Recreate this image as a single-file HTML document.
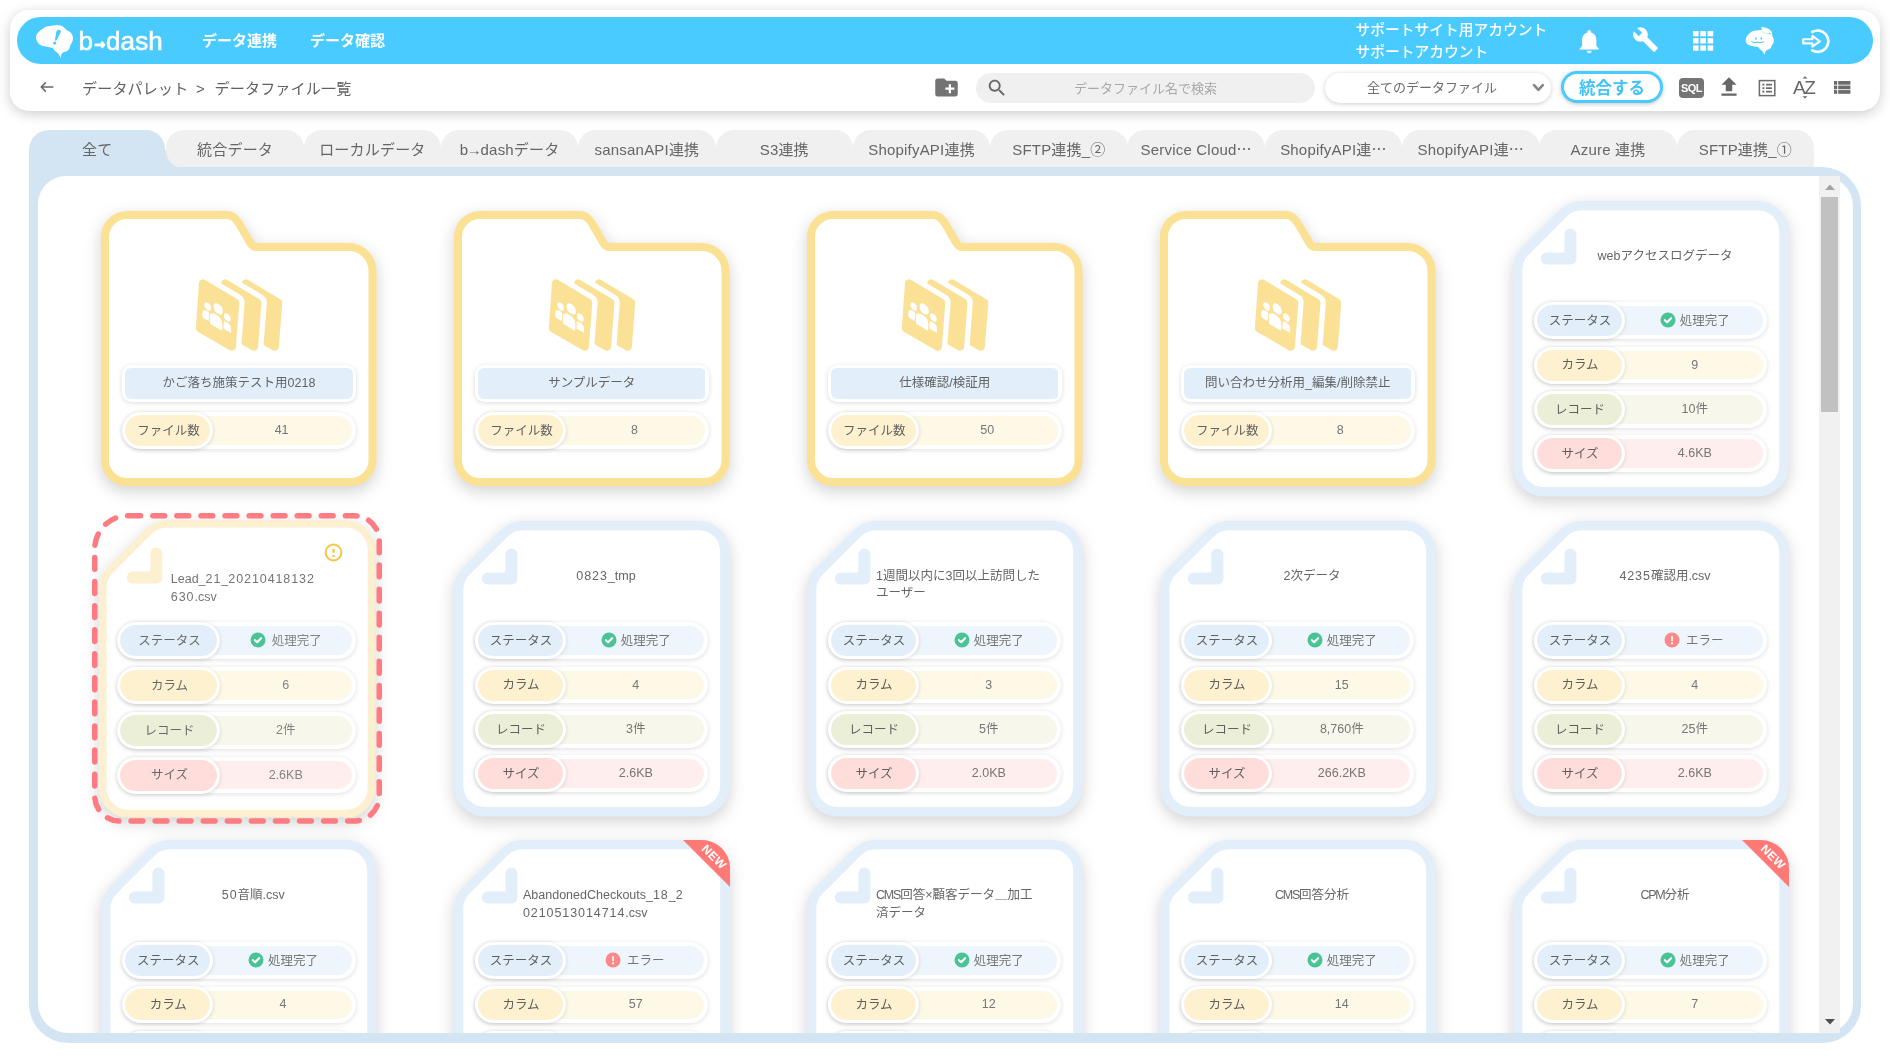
<!DOCTYPE html>
<html lang="ja"><head><meta charset="utf-8"><title>データファイル一覧</title>
<style>
html,body{margin:0;padding:0}
html{background:#fff}
body{width:1890px;height:1063px;overflow:hidden;background:#fff;position:relative;opacity:.999;
 font-family:"Liberation Sans","Noto Sans CJK JP",sans-serif;color:#5a5a5a;font-size:13px}
*{box-sizing:border-box}
.abs{position:absolute}
.hdr{position:absolute;left:10px;top:10px;width:1870px;height:101px;border-radius:19px;background:#fff;
 box-shadow:0 3px 13px rgba(0,0,0,.2)}
.bar{position:absolute;left:7px;top:7px;width:1856px;height:47px;border-radius:24px;background:#49cbff}
.nav{position:absolute;top:0;height:47px;line-height:47px;color:#fff;font-weight:700;font-size:15px;white-space:nowrap}
.acct{position:absolute;left:1338.6px;top:3.1px;color:#fff;font-size:14.75px;line-height:21.8px;white-space:nowrap;font-weight:500}
.bc{position:absolute;left:72px;top:66.6px;height:24px;line-height:24px;font-size:15px;color:#606060;white-space:nowrap;letter-spacing:.2px}
.search{position:absolute;left:966px;top:63px;width:339px;height:30px;border-radius:15px;background:#f0f0f0}
.search span{position:absolute;left:0;right:0;top:0;text-align:center;line-height:32px;font-size:13px;color:#a9a9a9}
.sel{position:absolute;left:1315px;top:63px;width:226px;height:30px;border-radius:15px;background:#fff;
 box-shadow:0 1px 5px rgba(0,0,0,.2)}
.sel span{position:absolute;left:0;width:214px;top:0;text-align:center;line-height:29.5px;font-size:13px;color:#6c6c6c}
.btn{position:absolute;left:1551px;top:61px;width:102px;height:32px;border-radius:16px;border:3px solid #49cbff;background:#fff;
 box-shadow:0 1px 4px rgba(0,0,0,.25);color:#41c3f8;font-size:16.5px;line-height:29.3px;text-align:center;font-weight:700}
.tabs{position:absolute;left:29px;top:130px;height:37.5px}
.tab{position:absolute;top:0;height:37.5px;width:137.5px;border-radius:18px 18px 0 0;background:#f0f0f0;color:#666;font-size:15px;
 line-height:39px;text-align:center;white-space:nowrap;letter-spacing:.2px}
.tab.on{background:#d3e4f3;border-radius:20px 19px 0 0;width:136.4px}
.wrap{position:absolute;left:29px;top:167.3px;width:1832px;height:875.7px;border-radius:0 39px 38px 39px;background:#d3e4f3}
.inner{position:absolute;left:9px;top:9px;width:1815px;height:856.7px;border-radius:28px 30px 29px 30px;background:#fff;overflow:hidden}
.card{position:absolute;width:276px}
.card svg.shape{position:absolute;left:0;top:0;overflow:visible}
.title{position:absolute;left:69px;width:166px;top:47px;height:40px;font-size:12.5px;line-height:17.6px;color:#666;white-space:nowrap}
.title.c{text-align:center}
.row{position:absolute;left:20px;width:234px;height:37px}
.val{position:absolute;left:.6px;top:.2px;width:232px;height:36.6px;border-radius:18.3px;padding:3.8px;
 box-shadow:0 1px 5px rgba(0,0,0,.13);font-size:12.5px;color:#767676;white-space:nowrap}
.selc .lab{color:#6a6a6a}.selc .val{color:#848484}.selc .title{color:#747474}.selc .val svg{margin-right:6px}
.dg{letter-spacing:.92px}.cp{letter-spacing:-1.2px}
.vt{height:29px;line-height:29px;text-align:center}
.lab{position:absolute;left:0;top:0;width:91px;height:37px;border-radius:18.5px;padding:2.8px;
 box-shadow:0 1px 4px rgba(0,0,0,.14);text-align:center;line-height:32.4px;font-size:12.5px;color:#606060;white-space:nowrap;text-indent:1.6px}
.r1 .lab{background:linear-gradient(#e2effa,#e2effa) content-box,#fff}.r1 .val{background:linear-gradient(#eef5fc,#eef5fc) content-box,#fff}
.r2 .lab{background:linear-gradient(#fdf1cf,#fdf1cf) content-box,#fff}.r2 .val{background:linear-gradient(#fef8e7,#fef8e7) content-box,#fff}
.r3 .lab{background:linear-gradient(#ecefd8,#ecefd8) content-box,#fff}.r3 .val{background:linear-gradient(#f7f8eb,#f7f8eb) content-box,#fff}
.r4 .lab{background:linear-gradient(#ffdddb,#ffdddb) content-box,#fff}.r4 .val{background:linear-gradient(#ffeeed,#ffeeed) content-box,#fff}
.val svg{vertical-align:-4.2px;margin-right:4px}
.fname{position:absolute;left:20.7px;top:154px;width:234px;height:37.3px;border-radius:9.5px;padding:3.3px;background:linear-gradient(#e2effa,#e2effa) content-box,#fff;
 box-shadow:0 1px 5px rgba(0,0,0,.14);text-align:center;line-height:30.7px;font-size:12.5px;color:#636363;white-space:nowrap}
.new{position:absolute;right:0;top:0;width:47px;height:47px;overflow:hidden;border-radius:0 28px 0 0}
.new i{position:absolute;left:0;top:0;width:0;height:0;border-top:47px solid #ff7a77;border-left:47px solid transparent}
.new b{position:absolute;left:8.6px;top:11px;width:44px;text-align:center;color:#fff;font-size:12px;font-weight:700;transform:rotate(45deg);
 letter-spacing:.3px;line-height:12px;font-style:normal}
</style></head>
<body>

<div class="hdr"><div class="bar">
<svg class="abs" style="left:13px;top:1px" width="50" height="44" viewBox="0 0 50 44"><path fill="#fff" d="M6.5,22.1 Q5.6,19.5 6.5,17.0 Q7.5,14.5 9.9,12.7 Q12.4,10.8 14.5,9.6 Q16.6,8.3 19.2,8.1 Q21.9,7.9 25.0,7.2 Q28.1,6.6 30.6,7.5 Q33.1,8.3 34.8,10.2 Q36.4,12.0 38.5,13.1 Q40.6,14.1 41.8,16.1 Q43.0,18.2 43.1,20.3 Q43.3,22.4 41.7,24.9 Q40.1,27.3 39.7,29.4 Q39.3,31.5 37.8,32.5 Q36.4,33.5 34.0,34.0 Q31.5,34.4 31.1,37.2 Q30.6,40.1 30.6,40.1 Q30.6,40.1 29.6,37.7 Q28.6,35.2 26.7,34.2 Q24.8,33.1 23.7,31.2 Q22.6,29.4 21.1,29.5 Q19.5,29.6 17.8,29.1 Q16.1,28.6 13.7,28.1 Q11.2,27.7 9.3,26.2 Q7.5,24.8 6.5,22.1Z"/>
<path fill="#49cbff" d="M26.2,14.2 Q26.4,11.6 28.8,11.7 Q31.2,12 30.6,14.4 L26.4,22.6 Q25.6,23.2 24.9,22.4 Z"/><circle cx="24.75" cy="25.1" r="1.6" fill="#49cbff"/></svg>
<div class="abs" style="left:61.5px;top:3.5px;height:40px;line-height:40px;color:#fff;font-weight:400;font-size:26px;letter-spacing:.05px;white-space:nowrap;-webkit-text-stroke:.55px #fff">b<span style="font-family:'DejaVu Sans',sans-serif;font-weight:700;font-size:13px;letter-spacing:0;position:relative;top:-1px;margin:0 1px 0 1.2px;-webkit-text-stroke:1.1px #fff">→</span>dash</div>
<div class="nav" style="left:185px">データ連携</div><div class="nav" style="left:293px">データ確認</div>
<div class="acct">サポートサイト用アカウント<br>サポートアカウント</div>
<div class="abs" style="left:1558px;top:9.5px"><svg width="28.5" height="28.5" viewBox="0 0 24 24" style=""><path fill="#fff" d="M12 22c1.1 0 2-.9 2-2h-4c0 1.1.89 2 2 2zm6-6v-5c0-3.07-1.64-5.64-4.5-6.32V4c0-.83-.67-1.5-1.5-1.5s-1.5.67-1.5 1.5v.68C7.63 5.36 6 7.92 6 11v5l-2 2v1h16v-1l-2-2z"/></svg></div>
<div class="abs" style="left:1615px;top:9px"><svg width="27" height="27" viewBox="0 0 24 24" style=""><path fill="#fff" d="M22.7 19l-9.1-9.1c.9-2.3.4-5-1.5-6.9-2-2-5-2.4-7.4-1.3L9 6 6 9 1.6 4.7C.4 7.1.9 10.1 2.9 12.1c1.9 1.9 4.6 2.4 6.9 1.5l9.1 9.1c.4.4 1 .4 1.4 0l2.3-2.3c.5-.4.5-1.1.1-1.4z"/></svg></div>
<svg class="abs" style="left:1676px;top:13.9px" width="21" height="20" viewBox="0 0 21 20"><g fill="#fff"><rect x="0" y="0" width="5.6" height="5.3"/><rect x="0" y="7.2" width="5.6" height="5.3"/><rect x="0" y="14.4" width="5.6" height="5.3"/><rect x="7.3" y="0" width="5.6" height="5.3"/><rect x="7.3" y="7.2" width="5.6" height="5.3"/><rect x="7.3" y="14.4" width="5.6" height="5.3"/><rect x="14.6" y="0" width="5.6" height="5.3"/><rect x="14.6" y="7.2" width="5.6" height="5.3"/><rect x="14.6" y="14.4" width="5.6" height="5.3"/></g></svg>
<svg class="abs" style="left:1718px;top:3px" width="50" height="40" viewBox="0 0 50 40"><path fill="#fff" d="M10.8,21.5 Q10.2,19.6 11.3,17.3 Q12.4,15.0 14.6,13.2 Q16.9,11.3 19.0,10.8 Q21.1,10.3 23.5,10.3 Q25.8,10.3 26.5,9.7 Q27.1,9.0 26.6,7.9 Q26.0,6.8 26.0,6.8 Q26.0,6.8 29.2,7.3 Q32.4,7.9 34.6,9.6 Q36.9,11.3 37.0,13.6 Q37.2,15.8 38.2,17.7 Q39.1,19.6 38.8,21.5 Q38.4,23.3 37.5,24.5 Q36.5,25.6 36.3,26.7 Q36.1,27.8 35.0,28.8 Q33.9,29.7 32.2,30.1 Q30.5,30.5 30.1,32.6 Q29.7,34.8 29.7,34.8 Q29.7,34.8 28.6,32.8 Q27.5,30.9 26.0,29.9 Q24.5,29.0 23.9,27.9 Q23.3,26.7 21.8,26.7 Q20.3,26.7 19.2,26.4 Q18.1,26.0 16.2,25.8 Q14.3,25.6 12.8,24.5 Q11.3,23.3 10.8,21.5Z"/>
<g fill="#49cbff"><ellipse cx="20.9" cy="18.4" rx=".8" ry="1.25"/><ellipse cx="26.3" cy="18.4" rx=".8" ry="1.25"/><circle cx="34.6" cy="13.5" r=".75"/></g>
<g fill="none" stroke="#49cbff" stroke-linecap="round"><path d="M16.8,21.6 Q19.6,23.6 22.5,22 Q25.5,23.6 28.4,21.6" stroke-width="1.1"/><path d="M27.2,11.2 Q30,14.6 35.4,13.9" stroke-width=".5" opacity=".6"/></g></svg>
<svg class="abs" style="left:1782px;top:9px" width="32" height="30" viewBox="0 0 32 30"><g fill="none" stroke="#fff" stroke-width="3" stroke-linecap="round" stroke-linejoin="round">
<path d="M13.2 6 A10.7 10.7 0 1 1 13.2 24.4" stroke-width="2.7"/><path d="M4.2 13.2 H13.4 V9.9 L20.8 15.3 L13.4 20.7 V17.4 H4.2 Z" stroke-width="2.1"/></g></svg>
</div>
<svg class="abs" style="left:28px;top:69px" width="18" height="16" viewBox="0 0 18 16"><path d="M14.8 8 H3.4 M7.4 3.9 L3.2 8 L7.4 12.1" fill="none" stroke="#666" stroke-width="1.5" stroke-linecap="round" stroke-linejoin="round"/></svg>
<div class="bc">データパレット<span style="margin:0 9.7px 0 7.5px">&gt;</span>データファイル一覧</div>
<div class="abs" style="left:923px;top:64px"><svg width="27" height="27" viewBox="0 0 24 24" style=""><path fill="#737373" d="M20 6h-8l-2-2H4c-1.11 0-1.99.89-1.99 2L2 18c0 1.11.89 2 2 2h16c1.11 0 2-.89 2-2V8c0-1.11-.89-2-2-2zm-1 8h-3v3h-2v-3h-3v-2h3V9h2v3h3v2z"/></svg></div>
<div class="search"><svg width="22" height="22" viewBox="0 0 24 24" style="position:absolute;left:10px;top:4px"><path fill="#666" d="M15.5 14h-.79l-.28-.27C15.41 12.59 16 11.11 16 9.5 16 5.91 13.09 3 9.5 3S3 5.91 3 9.5 5.91 16 9.5 16c1.61 0 3.09-.59 4.23-1.57l.27.28v.79l5 4.99L20.49 19l-4.99-5zm-6 0C7.01 14 5 11.99 5 9.5S7.01 5 9.5 5 14 7.01 14 9.5 11.99 14 9.5 14z"/></svg><span>データファイル名で検索</span></div>
<div class="sel"><span>全てのデータファイル</span><svg style="position:absolute;left:206.5px;top:9.6px" width="13" height="10" viewBox="0 0 13 10"><path d="M2 2.2 L6.4 6.9 L10.8 2.2" fill="none" stroke="#848484" stroke-width="2.6" stroke-linecap="round" stroke-linejoin="round"/></svg></div>
<div class="btn">統合する</div>
<div class="abs" style="left:1669px;top:68px;width:25px;height:20px;border-radius:4px;background:#757575;color:#fff;font-size:11px;font-weight:700;line-height:20px;text-align:center;letter-spacing:-.6px">SQL</div>
<div class="abs" style="left:1706px;top:64px"><svg width="26" height="26" viewBox="0 0 24 24" style=""><path fill="#666" d="M9 16h6v-6h4l-7-7-7 7h4zm-4 2h14v2H5z"/></svg></div>
<svg class="abs" style="left:1748px;top:69px" width="18" height="18" viewBox="0 0 18 18"><rect x="1.4" y="1.6" width="15.4" height="15" fill="none" stroke="#6b6b6b" stroke-width="1.5"/><g fill="#6b6b6b"><rect x="4.4" y="4.7" width="2" height="1.9"/><rect x="4.4" y="8.2" width="2" height="1.9"/><rect x="4.4" y="11.7" width="2" height="1.9"/><rect x="8" y="4.8" width="6" height="1.7"/><rect x="8" y="8.3" width="6" height="1.7"/><rect x="8" y="11.8" width="6" height="1.7"/></g></svg>
<div class="abs" style="left:1783px;top:66.7px;font-size:19px;line-height:22px;color:#666;letter-spacing:-1.5px">AZ</div>
<svg class="abs" style="left:1790px;top:64px" width="10" height="30" viewBox="0 0 10 30"><path fill="#666" d="M2.6 4.6 L5 2.2 L7.4 4.6Z M2.6 22.2 L5 24.6 L7.4 22.2Z"/></svg>
<svg class="abs" style="left:1824px;top:71.4px" width="17" height="13" viewBox="0 0 17 13"><g fill="#6b6b6b"><rect x="0" y="0" width="3.2" height="3.7"/><rect x="0" y="4.55" width="3.2" height="3.7"/><rect x="0" y="9.1" width="3.2" height="3.7"/><rect x="4.2" y="0" width="12.2" height="3.7"/><rect x="4.2" y="4.55" width="12.2" height="3.7"/><rect x="4.2" y="9.1" width="12.2" height="3.7"/></g></svg>
</div>
<div class="tabs"><div class="abs" style="left:130px;top:19.5px;width:40px;height:18px;background:#d3e4f3"></div>
<div class="tab on" style="left:0.0px">全て</div>
<div class="tab" style="left:137.3px;border-bottom-left-radius:18px">統合データ</div>
<div class="tab" style="left:274.6px">ローカルデータ</div>
<div class="tab" style="left:411.9px">b<span style="margin:0 -1.5px">→</span>dashデータ</div>
<div class="tab" style="left:549.2px">sansanAPI連携</div>
<div class="tab" style="left:686.5px">S3連携</div>
<div class="tab" style="left:823.8px">ShopifyAPI連携</div>
<div class="tab" style="left:961.1px">SFTP連携_②</div>
<div class="tab" style="left:1098.4px">Service Cloud<span style="font-family:'Noto Sans CJK JP',sans-serif;line-height:0">…</span></div>
<div class="tab" style="left:1235.7px">ShopifyAPI連<span style="font-family:'Noto Sans CJK JP',sans-serif;line-height:0">…</span></div>
<div class="tab" style="left:1373.0px">ShopifyAPI連<span style="font-family:'Noto Sans CJK JP',sans-serif;line-height:0">…</span></div>
<div class="tab" style="left:1510.3px">Azure 連携</div>
<div class="tab" style="left:1647.6px">SFTP連携_①</div>
</div>
<div class="wrap"><div class="inner">
<div class="card" style="left:63.3px;top:34.5px;height:275px"><svg class="shape" width="275.5" height="275" viewBox="0 0 275.5 275" style="filter:drop-shadow(0 5px 8px rgba(0,0,0,.18))"><path d="M4.0,26.0 A22,22 0 0 1 26.0,4.0 L125.6,4.0 Q132.6,4.0 137.44,11.59 L149.75,32.63 Q151.9,36 155.9,36 L247.5,36 A24,24 0 0 1 271.5,60 L271.5,249.0 A22,22 0 0 1 249.5,271.0 L26.0,271.0 A22,22 0 0 1 4.0,249.0 Z" fill="#fff" stroke="#fbe194" stroke-width="8" stroke-linejoin="round"/></svg><svg class="abs" style="left:83.7px;top:59.2px" width="110" height="90" viewBox="0 0 1299 1063">
<g fill="#fbe196" stroke="#fff" stroke-width="126" paint-order="stroke" stroke-linejoin="round">
<path transform="translate(507,0)" d="M165,155 A48,48 0 0 1 238,118 L618,346 A48,48 0 0 1 641,390 L601,911 A48,48 0 0 1 529,948 L151,729 A48,48 0 0 1 128,684 Z"/><path transform="translate(262,0)" d="M165,155 A48,48 0 0 1 238,118 L618,346 A48,48 0 0 1 641,390 L601,911 A48,48 0 0 1 529,948 L151,729 A48,48 0 0 1 128,684 Z"/><path d="M165,155 A48,48 0 0 1 238,118 L618,346 A48,48 0 0 1 641,390 L601,911 A48,48 0 0 1 529,948 L151,729 A48,48 0 0 1 128,684 Z"/></g>
<g fill="#fff" transform="matrix(1,0.58,0,1,0,-227.4)">
<ellipse cx="392" cy="460" rx="55" ry="58"/><ellipse cx="268" cy="504" rx="40" ry="44"/><ellipse cx="500" cy="499" rx="40" ry="44"/>
<path d="M295,676 L295,612 Q295,540 367,540 Q440,540 440,612 L440,676 Q440,692 424,692 L311,692 Q295,692 295,676 Z"/>
<path d="M205,652 L205,618 Q205,561 255,561 Q280,561 289,577 L279,668 L221,668 Q205,668 205,652 Z"/>
<path d="M545,642 L545,615 Q545,559 497,559 Q470,559 459,573 L453,657 L529,657 Q545,657 545,642 Z"/>
</g></svg><div class="fname">かご落ち施策テスト用0218</div><div class="row r2" style="left:21px;width:234px;top:201.4px"><div class="val" style="width:233.4px"><div class="vt" style="margin-left:84px">41</div></div><div class="lab" style="width:91px">ファイル数</div></div></div>
<div class="card" style="left:416.1px;top:34.5px;height:275px"><svg class="shape" width="275.5" height="275" viewBox="0 0 275.5 275" style="filter:drop-shadow(0 5px 8px rgba(0,0,0,.18))"><path d="M4.0,26.0 A22,22 0 0 1 26.0,4.0 L125.6,4.0 Q132.6,4.0 137.44,11.59 L149.75,32.63 Q151.9,36 155.9,36 L247.5,36 A24,24 0 0 1 271.5,60 L271.5,249.0 A22,22 0 0 1 249.5,271.0 L26.0,271.0 A22,22 0 0 1 4.0,249.0 Z" fill="#fff" stroke="#fbe194" stroke-width="8" stroke-linejoin="round"/></svg><svg class="abs" style="left:83.7px;top:59.2px" width="110" height="90" viewBox="0 0 1299 1063">
<g fill="#fbe196" stroke="#fff" stroke-width="126" paint-order="stroke" stroke-linejoin="round">
<path transform="translate(507,0)" d="M165,155 A48,48 0 0 1 238,118 L618,346 A48,48 0 0 1 641,390 L601,911 A48,48 0 0 1 529,948 L151,729 A48,48 0 0 1 128,684 Z"/><path transform="translate(262,0)" d="M165,155 A48,48 0 0 1 238,118 L618,346 A48,48 0 0 1 641,390 L601,911 A48,48 0 0 1 529,948 L151,729 A48,48 0 0 1 128,684 Z"/><path d="M165,155 A48,48 0 0 1 238,118 L618,346 A48,48 0 0 1 641,390 L601,911 A48,48 0 0 1 529,948 L151,729 A48,48 0 0 1 128,684 Z"/></g>
<g fill="#fff" transform="matrix(1,0.58,0,1,0,-227.4)">
<ellipse cx="392" cy="460" rx="55" ry="58"/><ellipse cx="268" cy="504" rx="40" ry="44"/><ellipse cx="500" cy="499" rx="40" ry="44"/>
<path d="M295,676 L295,612 Q295,540 367,540 Q440,540 440,612 L440,676 Q440,692 424,692 L311,692 Q295,692 295,676 Z"/>
<path d="M205,652 L205,618 Q205,561 255,561 Q280,561 289,577 L279,668 L221,668 Q205,668 205,652 Z"/>
<path d="M545,642 L545,615 Q545,559 497,559 Q470,559 459,573 L453,657 L529,657 Q545,657 545,642 Z"/>
</g></svg><div class="fname">サンプルデータ</div><div class="row r2" style="left:21px;width:234px;top:201.4px"><div class="val" style="width:233.4px"><div class="vt" style="margin-left:84px">8</div></div><div class="lab" style="width:91px">ファイル数</div></div></div>
<div class="card" style="left:769.0px;top:34.5px;height:275px"><svg class="shape" width="275.5" height="275" viewBox="0 0 275.5 275" style="filter:drop-shadow(0 5px 8px rgba(0,0,0,.18))"><path d="M4.0,26.0 A22,22 0 0 1 26.0,4.0 L125.6,4.0 Q132.6,4.0 137.44,11.59 L149.75,32.63 Q151.9,36 155.9,36 L247.5,36 A24,24 0 0 1 271.5,60 L271.5,249.0 A22,22 0 0 1 249.5,271.0 L26.0,271.0 A22,22 0 0 1 4.0,249.0 Z" fill="#fff" stroke="#fbe194" stroke-width="8" stroke-linejoin="round"/></svg><svg class="abs" style="left:83.7px;top:59.2px" width="110" height="90" viewBox="0 0 1299 1063">
<g fill="#fbe196" stroke="#fff" stroke-width="126" paint-order="stroke" stroke-linejoin="round">
<path transform="translate(507,0)" d="M165,155 A48,48 0 0 1 238,118 L618,346 A48,48 0 0 1 641,390 L601,911 A48,48 0 0 1 529,948 L151,729 A48,48 0 0 1 128,684 Z"/><path transform="translate(262,0)" d="M165,155 A48,48 0 0 1 238,118 L618,346 A48,48 0 0 1 641,390 L601,911 A48,48 0 0 1 529,948 L151,729 A48,48 0 0 1 128,684 Z"/><path d="M165,155 A48,48 0 0 1 238,118 L618,346 A48,48 0 0 1 641,390 L601,911 A48,48 0 0 1 529,948 L151,729 A48,48 0 0 1 128,684 Z"/></g>
<g fill="#fff" transform="matrix(1,0.58,0,1,0,-227.4)">
<ellipse cx="392" cy="460" rx="55" ry="58"/><ellipse cx="268" cy="504" rx="40" ry="44"/><ellipse cx="500" cy="499" rx="40" ry="44"/>
<path d="M295,676 L295,612 Q295,540 367,540 Q440,540 440,612 L440,676 Q440,692 424,692 L311,692 Q295,692 295,676 Z"/>
<path d="M205,652 L205,618 Q205,561 255,561 Q280,561 289,577 L279,668 L221,668 Q205,668 205,652 Z"/>
<path d="M545,642 L545,615 Q545,559 497,559 Q470,559 459,573 L453,657 L529,657 Q545,657 545,642 Z"/>
</g></svg><div class="fname">仕様確認/検証用</div><div class="row r2" style="left:21px;width:234px;top:201.4px"><div class="val" style="width:233.4px"><div class="vt" style="margin-left:84px">50</div></div><div class="lab" style="width:91px">ファイル数</div></div></div>
<div class="card" style="left:1122.0px;top:34.5px;height:275px"><svg class="shape" width="275.5" height="275" viewBox="0 0 275.5 275" style="filter:drop-shadow(0 5px 8px rgba(0,0,0,.18))"><path d="M4.0,26.0 A22,22 0 0 1 26.0,4.0 L125.6,4.0 Q132.6,4.0 137.44,11.59 L149.75,32.63 Q151.9,36 155.9,36 L247.5,36 A24,24 0 0 1 271.5,60 L271.5,249.0 A22,22 0 0 1 249.5,271.0 L26.0,271.0 A22,22 0 0 1 4.0,249.0 Z" fill="#fff" stroke="#fbe194" stroke-width="8" stroke-linejoin="round"/></svg><svg class="abs" style="left:83.7px;top:59.2px" width="110" height="90" viewBox="0 0 1299 1063">
<g fill="#fbe196" stroke="#fff" stroke-width="126" paint-order="stroke" stroke-linejoin="round">
<path transform="translate(507,0)" d="M165,155 A48,48 0 0 1 238,118 L618,346 A48,48 0 0 1 641,390 L601,911 A48,48 0 0 1 529,948 L151,729 A48,48 0 0 1 128,684 Z"/><path transform="translate(262,0)" d="M165,155 A48,48 0 0 1 238,118 L618,346 A48,48 0 0 1 641,390 L601,911 A48,48 0 0 1 529,948 L151,729 A48,48 0 0 1 128,684 Z"/><path d="M165,155 A48,48 0 0 1 238,118 L618,346 A48,48 0 0 1 641,390 L601,911 A48,48 0 0 1 529,948 L151,729 A48,48 0 0 1 128,684 Z"/></g>
<g fill="#fff" transform="matrix(1,0.58,0,1,0,-227.4)">
<ellipse cx="392" cy="460" rx="55" ry="58"/><ellipse cx="268" cy="504" rx="40" ry="44"/><ellipse cx="500" cy="499" rx="40" ry="44"/>
<path d="M295,676 L295,612 Q295,540 367,540 Q440,540 440,612 L440,676 Q440,692 424,692 L311,692 Q295,692 295,676 Z"/>
<path d="M205,652 L205,618 Q205,561 255,561 Q280,561 289,577 L279,668 L221,668 Q205,668 205,652 Z"/>
<path d="M545,642 L545,615 Q545,559 497,559 Q470,559 459,573 L453,657 L529,657 Q545,657 545,642 Z"/>
</g></svg><div class="fname">問い合わせ分析用_編集/削除禁止</div><div class="row r2" style="left:21px;width:234px;top:201.4px"><div class="val" style="width:233.4px"><div class="vt" style="margin-left:84px">8</div></div><div class="lab" style="width:91px">ファイル数</div></div></div>
<div class="card" style="left:1475.0px;top:24.3px;height:295px"><svg class="shape" width="275.5" height="295.4" viewBox="0 0 275.5 295.4" style="filter:drop-shadow(0 5px 8px rgba(0,0,0,.18))"><path d="M4.65,68.9260930650349 Q4.65,57.9260930650349 12.43,50.15 L50.15,12.43 Q57.9260930650349,4.65 68.9260930650349,4.65 L244.85000000000002,4.65 A26,26 0 0 1 270.85,30.65 L270.85,264.75 A26,26 0 0 1 244.85000000000002,290.75 L30.65,290.75 A26,26 0 0 1 4.65,264.75 Z" fill="#fff" stroke="#e2eef9" stroke-width="9.3" stroke-linejoin="round"/><path d="M57.4,33.5 V57.4 H33.8" fill="none" stroke="#e2eef9" stroke-width="12" stroke-linecap="round" stroke-linejoin="round"/></svg><div class="title c">webアクセスログデータ</div><div class="row r1" style="left:20.7px;width:233.8px;top:101.7px"><div class="val" style="width:233.0px"><div class="vt" style="margin-left:88px"><svg width="16" height="16" viewBox="0 0 16 16"><circle cx="8" cy="8" r="7.5" fill="#4ac395"/><path d="M4.9 8.2l2.2 2.1 4-4.1" fill="none" stroke="#fff" stroke-width="2.1" stroke-linecap="round" stroke-linejoin="round"/></svg><span style="position:relative;top:.9px">処理完了</span></div></div><div class="lab" style="width:91px">ステータス</div></div><div class="row r2" style="left:20.7px;width:233.8px;top:146.0px"><div class="val" style="width:233.0px"><div class="vt" style="margin-left:88px">9</div></div><div class="lab" style="width:91px">カラム</div></div><div class="row r3" style="left:20.7px;width:233.8px;top:190.3px"><div class="val" style="width:233.0px"><div class="vt" style="margin-left:88px">10件</div></div><div class="lab" style="width:91px">レコード</div></div><div class="row r4" style="left:20.7px;width:233.8px;top:234.6px"><div class="val" style="width:233.0px"><div class="vt" style="margin-left:88px">4.6KB</div></div><div class="lab" style="width:91px">サイズ</div></div></div>
<div class="card selc" style="left:60.8px;top:343.4px;height:298px"><svg class="shape" width="276.2" height="297.6" viewBox="0 0 276.2 297.6" style="filter:drop-shadow(0 5px 8px rgba(0,0,0,.18))"><path d="M3.75,68.5533008588991 Q3.75,57.55330085889911 11.53,49.78 L49.78,11.53 Q57.55330085889911,3.75 68.5533008588991,3.75 L246.45,3.75 A26,26 0 0 1 272.45,29.75 L272.45,267.85 A26,26 0 0 1 246.45,293.85 L29.75,293.85 A26,26 0 0 1 3.75,267.85 Z" fill="#fff" stroke="#fcf0d0" stroke-width="7.5" stroke-linejoin="round"/><path d="M57.4,33.5 V57.4 H33.8" fill="none" stroke="#fcf0d0" stroke-width="12" stroke-linecap="round" stroke-linejoin="round"/></svg><svg class="abs" style="left:-6.8px;top:-6.6px;overflow:visible" width="290" height="311" viewBox="0 0 290 311"><path d="M36.75,2.75 L262.25,2.75 A25,25 0 0 1 287.25,27.75 L287.25,283.05 A25,25 0 0 1 262.25,308.05 L27.75,308.05 A25,25 0 0 1 2.75,283.05 L2.75,35.75 A33,33 0 0 1 35.75,2.75 Z" fill="none" stroke="#ff7b82" stroke-width="5.5" stroke-linecap="round" stroke-dasharray="11.8 12.27"/></svg><svg class="abs" style="left:225.6px;top:23.4px" width="19" height="19" viewBox="0 0 19 19"><circle cx="9.5" cy="9.5" r="7.9" fill="#fff" stroke="#f7c645" stroke-width="2"/><path d="M9.5 5.9v3.7" stroke="#f7c645" stroke-width="2.3" stroke-linecap="butt"/><rect x="8.4" y="12" width="2.2" height="2.1" fill="#f7c645"/></svg><div class="title" style="left:72px;top:50px;line-height:18px">Lead_<span class="dg">21</span>_<span class="dg">20210418132</span><br><span class="dg">630</span>.csv</div><div class="row r1" style="left:18.7px;width:239.2px;top:102.5px"><div class="val" style="width:238.39999999999998px"><div class="vt" style="margin-left:96.9px"><svg width="16" height="16" viewBox="0 0 16 16"><circle cx="8" cy="8" r="7.5" fill="#4ac395"/><path d="M4.9 8.2l2.2 2.1 4-4.1" fill="none" stroke="#fff" stroke-width="2.1" stroke-linecap="round" stroke-linejoin="round"/></svg><span style="position:relative;top:.9px">処理完了</span></div></div><div class="lab" style="width:102.5px">ステータス</div></div><div class="row r2" style="left:18.7px;width:239.2px;top:147.3px"><div class="val" style="width:238.39999999999998px"><div class="vt" style="margin-left:96.9px">6</div></div><div class="lab" style="width:102.5px">カラム</div></div><div class="row r3" style="left:18.7px;width:239.2px;top:192.1px"><div class="val" style="width:238.39999999999998px"><div class="vt" style="margin-left:96.9px">2件</div></div><div class="lab" style="width:102.5px">レコード</div></div><div class="row r4" style="left:18.7px;width:239.2px;top:236.9px"><div class="val" style="width:238.39999999999998px"><div class="vt" style="margin-left:96.9px">2.6KB</div></div><div class="lab" style="width:102.5px">サイズ</div></div></div>
<div class="card" style="left:416.0px;top:344.3px;height:295px"><svg class="shape" width="275.5" height="295.4" viewBox="0 0 275.5 295.4" style="filter:drop-shadow(0 5px 8px rgba(0,0,0,.18))"><path d="M4.65,68.9260930650349 Q4.65,57.9260930650349 12.43,50.15 L50.15,12.43 Q57.9260930650349,4.65 68.9260930650349,4.65 L244.85000000000002,4.65 A26,26 0 0 1 270.85,30.65 L270.85,264.75 A26,26 0 0 1 244.85000000000002,290.75 L30.65,290.75 A26,26 0 0 1 4.65,264.75 Z" fill="#fff" stroke="#e2eef9" stroke-width="9.3" stroke-linejoin="round"/><path d="M57.4,33.5 V57.4 H33.8" fill="none" stroke="#e2eef9" stroke-width="12" stroke-linecap="round" stroke-linejoin="round"/></svg><div class="title c"><span class="dg">0823</span>_tmp</div><div class="row r1" style="left:20.7px;width:233.8px;top:101.7px"><div class="val" style="width:233.0px"><div class="vt" style="margin-left:88px"><svg width="16" height="16" viewBox="0 0 16 16"><circle cx="8" cy="8" r="7.5" fill="#4ac395"/><path d="M4.9 8.2l2.2 2.1 4-4.1" fill="none" stroke="#fff" stroke-width="2.1" stroke-linecap="round" stroke-linejoin="round"/></svg><span style="position:relative;top:.9px">処理完了</span></div></div><div class="lab" style="width:91px">ステータス</div></div><div class="row r2" style="left:20.7px;width:233.8px;top:146.0px"><div class="val" style="width:233.0px"><div class="vt" style="margin-left:88px">4</div></div><div class="lab" style="width:91px">カラム</div></div><div class="row r3" style="left:20.7px;width:233.8px;top:190.3px"><div class="val" style="width:233.0px"><div class="vt" style="margin-left:88px">3件</div></div><div class="lab" style="width:91px">レコード</div></div><div class="row r4" style="left:20.7px;width:233.8px;top:234.6px"><div class="val" style="width:233.0px"><div class="vt" style="margin-left:88px">2.6KB</div></div><div class="lab" style="width:91px">サイズ</div></div></div>
<div class="card" style="left:769.0px;top:344.3px;height:295px"><svg class="shape" width="275.5" height="295.4" viewBox="0 0 275.5 295.4" style="filter:drop-shadow(0 5px 8px rgba(0,0,0,.18))"><path d="M4.65,68.9260930650349 Q4.65,57.9260930650349 12.43,50.15 L50.15,12.43 Q57.9260930650349,4.65 68.9260930650349,4.65 L244.85000000000002,4.65 A26,26 0 0 1 270.85,30.65 L270.85,264.75 A26,26 0 0 1 244.85000000000002,290.75 L30.65,290.75 A26,26 0 0 1 4.65,264.75 Z" fill="#fff" stroke="#e2eef9" stroke-width="9.3" stroke-linejoin="round"/><path d="M57.4,33.5 V57.4 H33.8" fill="none" stroke="#e2eef9" stroke-width="12" stroke-linecap="round" stroke-linejoin="round"/></svg><div class="title">1週間以内に3回以上訪問した<br>ユーザー</div><div class="row r1" style="left:20.7px;width:233.8px;top:101.7px"><div class="val" style="width:233.0px"><div class="vt" style="margin-left:88px"><svg width="16" height="16" viewBox="0 0 16 16"><circle cx="8" cy="8" r="7.5" fill="#4ac395"/><path d="M4.9 8.2l2.2 2.1 4-4.1" fill="none" stroke="#fff" stroke-width="2.1" stroke-linecap="round" stroke-linejoin="round"/></svg><span style="position:relative;top:.9px">処理完了</span></div></div><div class="lab" style="width:91px">ステータス</div></div><div class="row r2" style="left:20.7px;width:233.8px;top:146.0px"><div class="val" style="width:233.0px"><div class="vt" style="margin-left:88px">3</div></div><div class="lab" style="width:91px">カラム</div></div><div class="row r3" style="left:20.7px;width:233.8px;top:190.3px"><div class="val" style="width:233.0px"><div class="vt" style="margin-left:88px">5件</div></div><div class="lab" style="width:91px">レコード</div></div><div class="row r4" style="left:20.7px;width:233.8px;top:234.6px"><div class="val" style="width:233.0px"><div class="vt" style="margin-left:88px">2.0KB</div></div><div class="lab" style="width:91px">サイズ</div></div></div>
<div class="card" style="left:1122.0px;top:344.3px;height:295px"><svg class="shape" width="275.5" height="295.4" viewBox="0 0 275.5 295.4" style="filter:drop-shadow(0 5px 8px rgba(0,0,0,.18))"><path d="M4.65,68.9260930650349 Q4.65,57.9260930650349 12.43,50.15 L50.15,12.43 Q57.9260930650349,4.65 68.9260930650349,4.65 L244.85000000000002,4.65 A26,26 0 0 1 270.85,30.65 L270.85,264.75 A26,26 0 0 1 244.85000000000002,290.75 L30.65,290.75 A26,26 0 0 1 4.65,264.75 Z" fill="#fff" stroke="#e2eef9" stroke-width="9.3" stroke-linejoin="round"/><path d="M57.4,33.5 V57.4 H33.8" fill="none" stroke="#e2eef9" stroke-width="12" stroke-linecap="round" stroke-linejoin="round"/></svg><div class="title c">2次データ</div><div class="row r1" style="left:20.7px;width:233.8px;top:101.7px"><div class="val" style="width:233.0px"><div class="vt" style="margin-left:88px"><svg width="16" height="16" viewBox="0 0 16 16"><circle cx="8" cy="8" r="7.5" fill="#4ac395"/><path d="M4.9 8.2l2.2 2.1 4-4.1" fill="none" stroke="#fff" stroke-width="2.1" stroke-linecap="round" stroke-linejoin="round"/></svg><span style="position:relative;top:.9px">処理完了</span></div></div><div class="lab" style="width:91px">ステータス</div></div><div class="row r2" style="left:20.7px;width:233.8px;top:146.0px"><div class="val" style="width:233.0px"><div class="vt" style="margin-left:88px">15</div></div><div class="lab" style="width:91px">カラム</div></div><div class="row r3" style="left:20.7px;width:233.8px;top:190.3px"><div class="val" style="width:233.0px"><div class="vt" style="margin-left:88px">8,760件</div></div><div class="lab" style="width:91px">レコード</div></div><div class="row r4" style="left:20.7px;width:233.8px;top:234.6px"><div class="val" style="width:233.0px"><div class="vt" style="margin-left:88px">266.2KB</div></div><div class="lab" style="width:91px">サイズ</div></div></div>
<div class="card" style="left:1475.0px;top:344.3px;height:295px"><svg class="shape" width="275.5" height="295.4" viewBox="0 0 275.5 295.4" style="filter:drop-shadow(0 5px 8px rgba(0,0,0,.18))"><path d="M4.65,68.9260930650349 Q4.65,57.9260930650349 12.43,50.15 L50.15,12.43 Q57.9260930650349,4.65 68.9260930650349,4.65 L244.85000000000002,4.65 A26,26 0 0 1 270.85,30.65 L270.85,264.75 A26,26 0 0 1 244.85000000000002,290.75 L30.65,290.75 A26,26 0 0 1 4.65,264.75 Z" fill="#fff" stroke="#e2eef9" stroke-width="9.3" stroke-linejoin="round"/><path d="M57.4,33.5 V57.4 H33.8" fill="none" stroke="#e2eef9" stroke-width="12" stroke-linecap="round" stroke-linejoin="round"/></svg><div class="title c"><span class="dg">4235</span>確認用.csv</div><div class="row r1" style="left:20.7px;width:233.8px;top:101.7px"><div class="val" style="width:233.0px"><div class="vt" style="margin-left:88px"><svg style="margin-right:5.6px;margin-left:-1.6px" width="16" height="16" viewBox="0 0 16 16"><circle cx="8" cy="8" r="7.5" fill="#fc8888"/><path d="M8 4.7v3.7" fill="none" stroke="#fff" stroke-width="1.7" stroke-linecap="round"/><circle cx="8" cy="11.3" r="1.1" fill="#fff"/></svg><span style="position:relative;top:.9px">エラー</span></div></div><div class="lab" style="width:91px">ステータス</div></div><div class="row r2" style="left:20.7px;width:233.8px;top:146.0px"><div class="val" style="width:233.0px"><div class="vt" style="margin-left:88px">4</div></div><div class="lab" style="width:91px">カラム</div></div><div class="row r3" style="left:20.7px;width:233.8px;top:190.3px"><div class="val" style="width:233.0px"><div class="vt" style="margin-left:88px">25件</div></div><div class="lab" style="width:91px">レコード</div></div><div class="row r4" style="left:20.7px;width:233.8px;top:234.6px"><div class="val" style="width:233.0px"><div class="vt" style="margin-left:88px">2.6KB</div></div><div class="lab" style="width:91px">サイズ</div></div></div>
<div class="card" style="left:63.3px;top:664.1px;height:295px"><svg class="shape" width="275.5" height="295.4" viewBox="0 0 275.5 295.4" style="filter:drop-shadow(0 5px 8px rgba(0,0,0,.18))"><path d="M4.65,68.9260930650349 Q4.65,57.9260930650349 12.43,50.15 L50.15,12.43 Q57.9260930650349,4.65 68.9260930650349,4.65 L244.85000000000002,4.65 A26,26 0 0 1 270.85,30.65 L270.85,264.75 A26,26 0 0 1 244.85000000000002,290.75 L30.65,290.75 A26,26 0 0 1 4.65,264.75 Z" fill="#fff" stroke="#e2eef9" stroke-width="9.3" stroke-linejoin="round"/><path d="M57.4,33.5 V57.4 H33.8" fill="none" stroke="#e2eef9" stroke-width="12" stroke-linecap="round" stroke-linejoin="round"/></svg><div class="title c"><span class="dg">50</span>音順.csv</div><div class="row r1" style="left:20.7px;width:233.8px;top:101.7px"><div class="val" style="width:233.0px"><div class="vt" style="margin-left:88px"><svg width="16" height="16" viewBox="0 0 16 16"><circle cx="8" cy="8" r="7.5" fill="#4ac395"/><path d="M4.9 8.2l2.2 2.1 4-4.1" fill="none" stroke="#fff" stroke-width="2.1" stroke-linecap="round" stroke-linejoin="round"/></svg><span style="position:relative;top:.9px">処理完了</span></div></div><div class="lab" style="width:91px">ステータス</div></div><div class="row r2" style="left:20.7px;width:233.8px;top:146.0px"><div class="val" style="width:233.0px"><div class="vt" style="margin-left:88px">4</div></div><div class="lab" style="width:91px">カラム</div></div><div class="row r3" style="left:20.7px;width:233.8px;top:190.3px"><div class="val" style="width:233.0px"><div class="vt" style="margin-left:88px"></div></div><div class="lab" style="width:91px">レコード</div></div></div>
<div class="card" style="left:416.0px;top:664.1px;height:295px"><svg class="shape" width="275.5" height="295.4" viewBox="0 0 275.5 295.4" style="filter:drop-shadow(0 5px 8px rgba(0,0,0,.18))"><path d="M4.65,68.9260930650349 Q4.65,57.9260930650349 12.43,50.15 L50.15,12.43 Q57.9260930650349,4.65 68.9260930650349,4.65 L244.85000000000002,4.65 A26,26 0 0 1 270.85,30.65 L270.85,264.75 A26,26 0 0 1 244.85000000000002,290.75 L30.65,290.75 A26,26 0 0 1 4.65,264.75 Z" fill="#fff" stroke="#e2eef9" stroke-width="9.3" stroke-linejoin="round"/><path d="M57.4,33.5 V57.4 H33.8" fill="none" stroke="#e2eef9" stroke-width="12" stroke-linecap="round" stroke-linejoin="round"/></svg><div class="new"><i></i><b>NEW</b></div><div class="title">AbandonedCheckouts_<span class="dg">18</span>_2<br><span class="dg">0210513014714</span>.csv</div><div class="row r1" style="left:20.7px;width:233.8px;top:101.7px"><div class="val" style="width:233.0px"><div class="vt" style="margin-left:88px"><svg style="margin-right:5.6px;margin-left:-1.6px" width="16" height="16" viewBox="0 0 16 16"><circle cx="8" cy="8" r="7.5" fill="#fc8888"/><path d="M8 4.7v3.7" fill="none" stroke="#fff" stroke-width="1.7" stroke-linecap="round"/><circle cx="8" cy="11.3" r="1.1" fill="#fff"/></svg><span style="position:relative;top:.9px">エラー</span></div></div><div class="lab" style="width:91px">ステータス</div></div><div class="row r2" style="left:20.7px;width:233.8px;top:146.0px"><div class="val" style="width:233.0px"><div class="vt" style="margin-left:88px">57</div></div><div class="lab" style="width:91px">カラム</div></div><div class="row r3" style="left:20.7px;width:233.8px;top:190.3px"><div class="val" style="width:233.0px"><div class="vt" style="margin-left:88px"></div></div><div class="lab" style="width:91px">レコード</div></div></div>
<div class="card" style="left:769.0px;top:664.1px;height:295px"><svg class="shape" width="275.5" height="295.4" viewBox="0 0 275.5 295.4" style="filter:drop-shadow(0 5px 8px rgba(0,0,0,.18))"><path d="M4.65,68.9260930650349 Q4.65,57.9260930650349 12.43,50.15 L50.15,12.43 Q57.9260930650349,4.65 68.9260930650349,4.65 L244.85000000000002,4.65 A26,26 0 0 1 270.85,30.65 L270.85,264.75 A26,26 0 0 1 244.85000000000002,290.75 L30.65,290.75 A26,26 0 0 1 4.65,264.75 Z" fill="#fff" stroke="#e2eef9" stroke-width="9.3" stroke-linejoin="round"/><path d="M57.4,33.5 V57.4 H33.8" fill="none" stroke="#e2eef9" stroke-width="12" stroke-linecap="round" stroke-linejoin="round"/></svg><div class="title"><span class="cp">CMS</span>回答×顧客データ＿加工<br>済データ</div><div class="row r1" style="left:20.7px;width:233.8px;top:101.7px"><div class="val" style="width:233.0px"><div class="vt" style="margin-left:88px"><svg width="16" height="16" viewBox="0 0 16 16"><circle cx="8" cy="8" r="7.5" fill="#4ac395"/><path d="M4.9 8.2l2.2 2.1 4-4.1" fill="none" stroke="#fff" stroke-width="2.1" stroke-linecap="round" stroke-linejoin="round"/></svg><span style="position:relative;top:.9px">処理完了</span></div></div><div class="lab" style="width:91px">ステータス</div></div><div class="row r2" style="left:20.7px;width:233.8px;top:146.0px"><div class="val" style="width:233.0px"><div class="vt" style="margin-left:88px">12</div></div><div class="lab" style="width:91px">カラム</div></div><div class="row r3" style="left:20.7px;width:233.8px;top:190.3px"><div class="val" style="width:233.0px"><div class="vt" style="margin-left:88px"></div></div><div class="lab" style="width:91px">レコード</div></div></div>
<div class="card" style="left:1122.0px;top:664.1px;height:295px"><svg class="shape" width="275.5" height="295.4" viewBox="0 0 275.5 295.4" style="filter:drop-shadow(0 5px 8px rgba(0,0,0,.18))"><path d="M4.65,68.9260930650349 Q4.65,57.9260930650349 12.43,50.15 L50.15,12.43 Q57.9260930650349,4.65 68.9260930650349,4.65 L244.85000000000002,4.65 A26,26 0 0 1 270.85,30.65 L270.85,264.75 A26,26 0 0 1 244.85000000000002,290.75 L30.65,290.75 A26,26 0 0 1 4.65,264.75 Z" fill="#fff" stroke="#e2eef9" stroke-width="9.3" stroke-linejoin="round"/><path d="M57.4,33.5 V57.4 H33.8" fill="none" stroke="#e2eef9" stroke-width="12" stroke-linecap="round" stroke-linejoin="round"/></svg><div class="title c"><span class="cp">CMS</span>回答分析</div><div class="row r1" style="left:20.7px;width:233.8px;top:101.7px"><div class="val" style="width:233.0px"><div class="vt" style="margin-left:88px"><svg width="16" height="16" viewBox="0 0 16 16"><circle cx="8" cy="8" r="7.5" fill="#4ac395"/><path d="M4.9 8.2l2.2 2.1 4-4.1" fill="none" stroke="#fff" stroke-width="2.1" stroke-linecap="round" stroke-linejoin="round"/></svg><span style="position:relative;top:.9px">処理完了</span></div></div><div class="lab" style="width:91px">ステータス</div></div><div class="row r2" style="left:20.7px;width:233.8px;top:146.0px"><div class="val" style="width:233.0px"><div class="vt" style="margin-left:88px">14</div></div><div class="lab" style="width:91px">カラム</div></div><div class="row r3" style="left:20.7px;width:233.8px;top:190.3px"><div class="val" style="width:233.0px"><div class="vt" style="margin-left:88px"></div></div><div class="lab" style="width:91px">レコード</div></div></div>
<div class="card" style="left:1475.0px;top:664.1px;height:295px"><svg class="shape" width="275.5" height="295.4" viewBox="0 0 275.5 295.4" style="filter:drop-shadow(0 5px 8px rgba(0,0,0,.18))"><path d="M4.65,68.9260930650349 Q4.65,57.9260930650349 12.43,50.15 L50.15,12.43 Q57.9260930650349,4.65 68.9260930650349,4.65 L244.85000000000002,4.65 A26,26 0 0 1 270.85,30.65 L270.85,264.75 A26,26 0 0 1 244.85000000000002,290.75 L30.65,290.75 A26,26 0 0 1 4.65,264.75 Z" fill="#fff" stroke="#e2eef9" stroke-width="9.3" stroke-linejoin="round"/><path d="M57.4,33.5 V57.4 H33.8" fill="none" stroke="#e2eef9" stroke-width="12" stroke-linecap="round" stroke-linejoin="round"/></svg><div class="new"><i></i><b>NEW</b></div><div class="title c"><span class="cp">CPM</span>分析</div><div class="row r1" style="left:20.7px;width:233.8px;top:101.7px"><div class="val" style="width:233.0px"><div class="vt" style="margin-left:88px"><svg width="16" height="16" viewBox="0 0 16 16"><circle cx="8" cy="8" r="7.5" fill="#4ac395"/><path d="M4.9 8.2l2.2 2.1 4-4.1" fill="none" stroke="#fff" stroke-width="2.1" stroke-linecap="round" stroke-linejoin="round"/></svg><span style="position:relative;top:.9px">処理完了</span></div></div><div class="lab" style="width:91px">ステータス</div></div><div class="row r2" style="left:20.7px;width:233.8px;top:146.0px"><div class="val" style="width:233.0px"><div class="vt" style="margin-left:88px">7</div></div><div class="lab" style="width:91px">カラム</div></div><div class="row r3" style="left:20.7px;width:233.8px;top:190.3px"><div class="val" style="width:233.0px"><div class="vt" style="margin-left:88px"></div></div><div class="lab" style="width:91px">レコード</div></div></div>
</div>
<div class="abs" style="left:1790.3px;top:9px;width:20.6px;height:856.7px;background:#f1f1f1"><svg class="abs" style="left:5.5px;top:8px" width="10" height="6" viewBox="0 0 10 6"><path d="M0 6 L5 0.6 L10 6Z" fill="#a3a3a3"/></svg><div class="abs" style="left:1.8px;top:20.5px;width:16.8px;height:215px;background:#c1c1c1"></div><svg class="abs" style="left:5.5px;top:842.7px" width="10" height="6" viewBox="0 0 10 6"><path d="M0 0 L5 5.4 L10 0Z" fill="#505050"/></svg></div>
</div>

</body></html>
